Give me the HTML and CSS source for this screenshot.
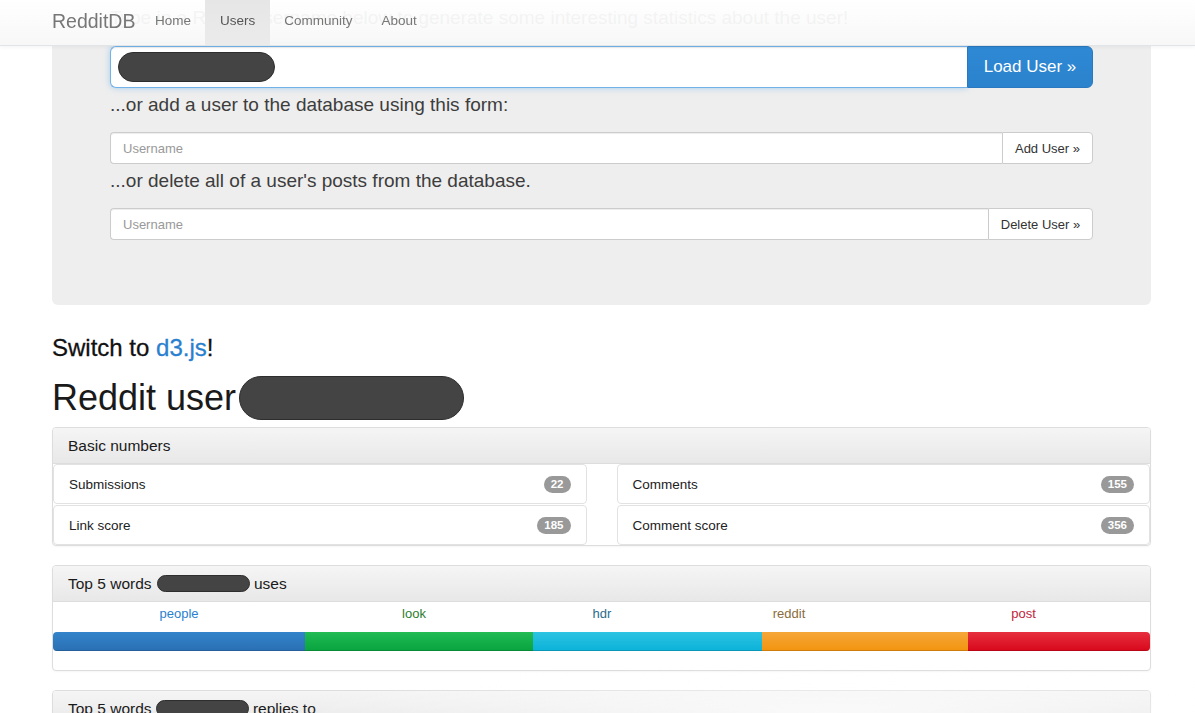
FILE: index.html
```html
<!DOCTYPE html>
<html lang="en">
<head>
<meta charset="utf-8">
<title>RedditDB - Users</title>
<link rel="stylesheet" href="styles.css">
</head>
<body>
<nav class="navbar">
  <div class="nav-inner">
    <a class="brand" href="#">RedditDB</a>
    <ul class="nav">
      <li><a href="#">Home</a></li>
      <li class="active"><a href="#">Users</a></li>
      <li><a href="#">Community</a></li>
      <li><a href="#">About</a></li>
    </ul>
  </div>
</nav>

<main class="container">
  <section class="jumbotron">
    <p class="lead">Type in a Reddit username below to generate some interesting statistics about the user!</p>
    <div class="input-group input-group-lg">
      <div class="form-control focused"><span class="redact redact-input"></span></div>
      <button class="btn btn-primary">Load User »</button>
    </div>
    <p class="lead">...or add a user to the database using this form:</p>
    <div class="input-group">
      <input class="form-control" type="text" placeholder="Username">
      <button class="btn btn-default">Add User »</button>
    </div>
    <p class="lead">...or delete all of a user's posts from the database.</p>
    <div class="input-group">
      <input class="form-control" type="text" placeholder="Username">
      <button class="btn btn-default btn-wide">Delete User »</button>
    </div>
  </section>

  <h3 class="switch">Switch to <a href="#">d3.js</a>!</h3>
  <h1 class="user-title">Reddit user<span class="redact redact-h1"></span></h1>

  <section class="panel">
    <div class="panel-heading">Basic numbers</div>
    <div class="panel-body numbers">
      <ul class="list-group">
        <li class="list-item"><span>Submissions</span><span class="badge">22</span></li>
        <li class="list-item"><span>Link score</span><span class="badge">185</span></li>
      </ul>
      <ul class="list-group">
        <li class="list-item"><span>Comments</span><span class="badge">155</span></li>
        <li class="list-item"><span>Comment score</span><span class="badge">356</span></li>
      </ul>
    </div>
  </section>

  <section class="panel">
    <div class="panel-heading">Top 5 words<span class="redact redact-small"></span> uses</div>
    <div class="panel-body words">
      <div class="word-labels">
        <span class="t-primary">people</span>
        <span class="t-success">look</span>
        <span class="t-info">hdr</span>
        <span class="t-warning">reddit</span>
        <span class="t-danger">post</span>
      </div>
      <div class="progress">
        <div class="bar bar-primary" style="width:252px"></div>
        <div class="bar bar-success" style="width:228px"></div>
        <div class="bar bar-info" style="width:229px"></div>
        <div class="bar bar-warning" style="width:206px"></div>
        <div class="bar bar-danger" style="width:182px"></div>
      </div>
    </div>
  </section>

  <section class="panel">
    <div class="panel-heading">Top 5 words<span class="redact redact-small tight"></span> replies to</div>
    <div class="panel-body words">
      <div class="word-labels">
        <span class="t-primary">&nbsp;</span>
      </div>
    </div>
  </section>
</main>
<div class="bottom-glow"></div>
</body>
</html>
```

FILE: styles.css
```css
html { overflow: hidden; }
body {
  margin: 0;
  font-family: "Liberation Sans", Arial, Helvetica, sans-serif;
  font-size: 13.5px;
  color: #333;
  background: #fff;
}
a { text-decoration: none; }

/* navbar */
.navbar {
  position: fixed;
  top: 0;
  left: 0;
  right: 0;
  height: 45px;
  background: linear-gradient(rgba(255,255,255,0.955), rgba(247,247,247,0.955));
  border-bottom: 1px solid rgba(222,226,230,0.9);
  box-shadow: 0 1px 4px rgba(0,0,0,0.05);
  z-index: 10;
}
.nav-inner {
  display: flex;
  align-items: stretch;
  height: 45px;
  padding-left: 52px;
}
.brand {
  font-size: 19.5px;
  line-height: 42px;
  color: #777;
}
.nav {
  display: flex;
  list-style: none;
  margin: 0 0 0 5px;
  padding: 0;
}
.nav li a {
  display: block;
  padding: 0 14.5px;
  line-height: 42px;
  height: 45px;
  font-size: 13.5px;
  color: #777;
}
.nav li.active a {
  background: linear-gradient(#e6e6e6, #ebebeb);
  color: #555;
}

/* container */
.container {
  width: 1099px;
  margin-left: 52px;
}

/* jumbotron */
.jumbotron {
  background: #eee;
  border-radius: 0 0 6px 6px;
  padding: 4px 58px 65px;
}
.lead {
  margin: 0 0 14px;
  font-size: 19px;
  line-height: 27px;
  color: #3d3d3d;
}
.input-group + .lead { margin-top: 3px; }
.jumbotron > .lead:first-child { margin-bottom: 15px; color: #333; }

.input-group {
  display: flex;
  height: 32px;
}
.form-control {
  flex: 1;
  box-sizing: border-box;
  height: 100%;
  margin: 0;
  border: 1px solid #ccc;
  border-right: 0;
  border-radius: 4px 0 0 4px;
  background: #fff;
  padding: 0 12px;
  font-family: inherit;
  font-size: 13px;
  color: #555;
  box-shadow: inset 0 1px 1px rgba(0,0,0,0.075);
  outline: none;
}
.form-control::placeholder { color: #999; }
.input-group-lg { height: 42px; }
.input-group-lg .form-control {
  border-radius: 6px 0 0 6px;
  display: flex;
  align-items: center;
  padding: 0 7px;
}
.form-control.focused {
  border: 1px solid #72b2e8;
  border-right: 0;
  box-shadow: inset 0 1px 1px rgba(0,0,0,0.075), 0 0 6px rgba(102,175,233,0.55);
}
.btn {
  font-family: inherit;
  cursor: pointer;
  margin: 0;
  box-sizing: border-box;
}
.btn-primary {
  width: 126px;
  height: 42px;
  font-size: 17px;
  color: #fff;
  background: linear-gradient(#2f89d4, #2b82cd);
  border: 1px solid #2a79c0;
  border-radius: 0 6px 6px 0;
}
.btn-default {
  width: 91px;
  height: 32px;
  font-size: 13px;
  color: #333;
  background: #fff;
  border: 1px solid #ccc;
  border-radius: 0 4px 4px 0;
}
.btn-wide { width: 105px; }

/* redactions */
.redact {
  display: inline-block;
  background: #444;
  border: 1px solid #2e2e2e;
  box-sizing: border-box;
}
.redact-input {
  width: 157px;
  height: 30px;
  border-radius: 15px;
}
.redact-h1 {
  width: 225px;
  height: 44px;
  border-radius: 22px;
  margin-left: 3px;
}
.redact-small {
  width: 93px;
  height: 17px;
  border-radius: 9px;
  margin-left: 5px;
  vertical-align: -3px;
}
.redact-small.tight { margin-left: 4px; }

/* headings */
.switch {
  margin: 30px 0 0;
  font-size: 24px;
  line-height: 26px;
  font-weight: normal;
  color: #111;
  -webkit-text-stroke: 0.3px #111;
}
.switch a { color: #2a80cf; -webkit-text-stroke: 0.3px #2a80cf; }
.user-title {
  display: flex;
  align-items: center;
  height: 44px;
  margin: 15px 0 7px;
  font-size: 36px;
  font-weight: normal;
  color: #1a1a1a;
}

/* panels */
.panel {
  border: 1px solid #ddd;
  border-radius: 4px;
  margin-bottom: 19px;
  background: #fff;
  box-shadow: 0 1px 2px rgba(0,0,0,0.04);
}
.panel-heading {
  height: 35px;
  line-height: 35px;
  padding: 0 15px;
  font-size: 15.5px;
  color: #1a1a1a;
  background: linear-gradient(#f5f5f5, #e8e8e8);
  border-bottom: 1px solid #ddd;
  border-radius: 3px 3px 0 0;
}
.numbers {
  display: grid;
  grid-template-columns: 1fr 1fr;
  column-gap: 30px;
}
.list-group {
  list-style: none;
  margin: 0;
  padding: 0;
  display: flex;
  flex-direction: column;
  gap: 1px;
}
.list-item {
  display: flex;
  justify-content: space-between;
  align-items: center;
  height: 40px;
  box-sizing: border-box;
  padding: 0 15px;
  border: 1px solid #e2e2e2;
  border-radius: 4px;
  font-size: 13.5px;
  color: #222;
}
.badge {
  display: inline-block;
  min-width: 12px;
  padding: 2px 7px;
  border-radius: 10px;
  background: #999;
  color: #fff;
  font-size: 11.5px;
  font-weight: bold;
  line-height: 13px;
  text-align: center;
}

.words { padding: 0 0 19px; }
.word-labels {
  display: grid;
  grid-template-columns: 252px 218px 158px 216px 253px;
  height: 20px;
  padding-top: 2px;
  line-height: 20px;
  font-size: 13px;
  text-align: center;
}
.t-primary { color: #2a7fcf; }
.t-success { color: #2b7d2e; }
.t-info { color: #2d6b8c; }
.t-warning { color: #8a6d3b; }
.t-danger { color: #c2243b; }

.progress {
  display: flex;
  height: 19px;
  margin-top: 8px;
  border-radius: 4px;
  overflow: hidden;
  background: #f5f5f5;
}
.bar { height: 100%; box-shadow: inset 0 -1px 0 rgba(0,0,0,0.15); }
.bar-primary { background: linear-gradient(#3384cb, #2a6fb3); }
.bar-success { background: linear-gradient(#22bb54, #08a33f); }
.bar-info { background: linear-gradient(#2dc3e3, #0ab2d8); }
.bar-warning { background: linear-gradient(#f6a73a, #f2930e); }
.bar-danger { background: linear-gradient(#e6303f, #d8071b); }

.bottom-glow {
  position: fixed;
  left: 280px;
  right: 0;
  bottom: 0;
  height: 48px;
  pointer-events: none;
  background: radial-gradient(ellipse 60% 100% at 60% 100%, rgba(255,255,255,0.7), rgba(255,255,255,0) 100%);
}
```
